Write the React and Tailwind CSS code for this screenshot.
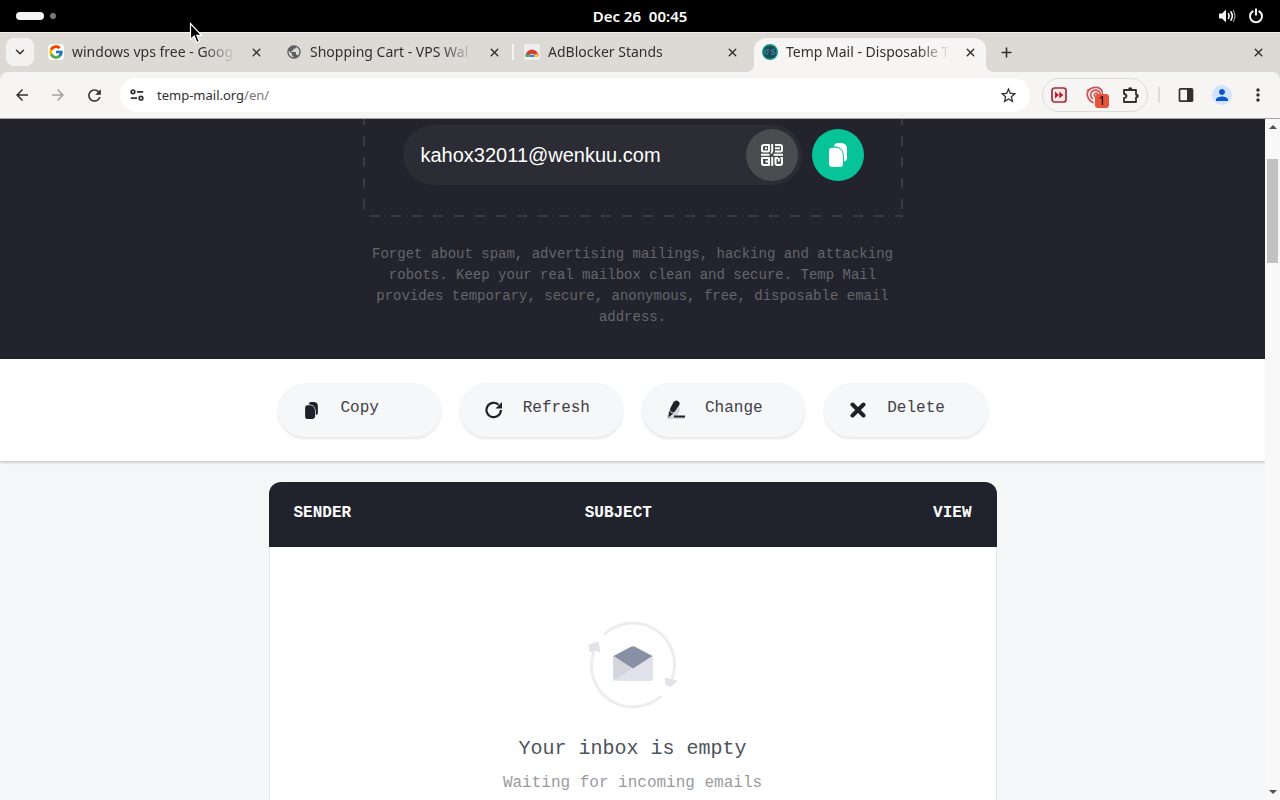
import { X, Plus, ChevronDown } from "lucide-react";
import { FcGoogle } from "react-icons/fc";
import {
  MdArrowBack,
  MdArrowForward,
  MdRefresh,
  MdStarBorder,
  MdPerson,
  MdMoreVert,
  MdPublic,
} from "react-icons/md";

const AdBlockFavicon = () => (
  <svg width="16" height="16" viewBox="0 0 16 16">
    <rect width="16" height="16" rx="2" fill="#eeeef2" />
    <path d="M1.5 12a6.5 6.5 0 0 1 13 0h-3.6a3 3 0 0 0-5.8 0z" fill="#d6402f" />
    <path d="M1.500 13a6.500 6.500 0 0 1 1.200-3.700l3 1.600a3 3 0 0 0-.6 2.100z" fill="#3fa757" />
    <path d="M14.500 13a6.500 6.500 0 0 0-1.200-3.700l-3 1.600a3 3 0 0 1 .6 2.100z" fill="#f5c52c" />
    <path d="M5.400 13a2.600 2.600 0 0 1 5.200 0z" fill="#3f83c9" />
  </svg>
);

const TempMailFavicon = () => (
  <svg width="16" height="16" viewBox="0 0 16 16">
    <circle cx="8" cy="8" r="7.3" fill="#1d4a5a" stroke="#179b86" strokeWidth="1.4" />
    <path
      d="M7 5.7H4.3C3 5.7 3 7.8 3 8.200s0 2 1.300 2H6M4.800 8h2M12.800 5.700h-2c-1.600 0-1.600 2.200 0 2.200h.8c1.600 0 1.600 2.300 0 2.300H9"
      fill="none"
      stroke="#3f9fa6"
      strokeWidth="1"
    />
  </svg>
);

const TuneIcon = () => (
  <svg width="14" height="12" viewBox="0 0 14 12" fill="none" stroke="#303030" strokeWidth="1.7">
    <circle cx="3" cy="2.800" r="1.800" />
    <path d="M7 2.800h6.200M.8 9.200H7" />
    <circle cx="11" cy="9.200" r="1.800" />
  </svg>
);

const VolumeIcon = () => (
  <svg width="18" height="16" viewBox="0 0 18 16" fill="none" stroke="#f2f2f2" strokeWidth="1.700" strokeLinecap="round">
    <path d="M1 5.500h3L8 1.500v13l-4-4H1z" fill="#f2f2f2" stroke="none" />
    <path d="M10.500 5.800q1.400 2.200 0 4.400" />
    <path d="M13 4q2.600 4 0 8" />
    <path d="M15.300 2.500q3.400 5.500 0 11" stroke="#9a9a9a" strokeWidth="1.200" />
  </svg>
);

const PowerIcon = () => (
  <svg width="16" height="16" viewBox="0 0 16 16" fill="none" stroke="#f2f2f2" strokeWidth="2" strokeLinecap="round">
    <path d="M4.700 3.300a6 6 0 1 0 6.600 0M8 1.200v5.600" />
  </svg>
);

const FastForwardIcon = () => (
  <svg width="16" height="16" viewBox="0 0 16 16">
    <rect x="1" y="1" width="14" height="14" rx="2.500" fill="#fbe9ea" stroke="#a92a35" strokeWidth="1.700" />
    <path d="M4 4.500 8 8l-4 3.500zM8.300 4.500l4 3.500-4 3.500z" fill="#b3212e" />
  </svg>
);

const SpiralIcon = () => (
  <svg width="18" height="18" viewBox="0 0 18 18" fill="none" stroke="#d2555a" strokeLinecap="round">
    <path d="M16 5C14 1 8 .2 4 3S.6 11 4 14.500l3 2" strokeWidth="1.800" />
    <path d="M14.500 7.500C13 4 9 3.400 6.500 5.300S4 10.500 6.500 12.500" strokeWidth="1.700" />
    <path d="M12.500 9C12 7 9.800 6.600 8.700 7.800s-.4 2.700.8 3" strokeWidth="1.500" />
    <path d="M1 4h3M16.500 6v3" strokeWidth="1.200" />
  </svg>
);

const PuzzleIcon = () => (
  <svg width="18" height="18" viewBox="0 0 18 18">
    <path
      d="M2 4h12v4.500a1.500 1.500 0 0 1 0 3V16H2v-4q2.500-.3 2.500-2T2 8z"
      fill="none"
      stroke="#303030"
      strokeWidth="1.800"
      strokeLinejoin="round"
    />
    <path d="M6 3.500a2.200 2.200 0 0 1 4.400 0zM14.500 7.800a2.200 2.200 0 0 1 0 4.400z" fill="#303030" />
  </svg>
);

const SidePanelIcon = () => (
  <svg width="16" height="16" viewBox="0 0 16 16">
    <rect x="1.500" y="1.800" width="13" height="12.400" rx="1" fill="none" stroke="#303030" strokeWidth="1.700" />
    <path d="M9 2h5.500v12H9z" fill="#303030" />
  </svg>
);

const QrIcon = () => (
  <svg width="22" height="22" viewBox="0 0 22 22" fill="none" stroke="#fff" strokeWidth="2" strokeLinejoin="round">
    <path d="M3 1h5v5q0 1.500-1.500 1.500h-4Q1 7.500 1 6V3q0-2 2-2zM4 4.200h2" />
    <path d="M14 1h5q2 0 2 2v3q0 1.500-1.500 1.500H14M14 4.200h5M11.200 0v7q0 1.500-1.500 2" />
    <path d="M0 10.800h8.500M12.500 10.800H22" />
    <path d="M1 14h7v7H3q-2 0-2-2zM4.500 17.500H8M11.200 13v9" />
    <path d="M17 14h-2.500v5q0 2 2 2H19q2 0 2-2v-5h-1.500M17.800 14v3.500" />
  </svg>
);

const CopyIcon = ({ width, height }) => (
  <svg width={width} height={height} viewBox="0 0 18 24" fill="currentColor">
    <path d="M5 3.500Q5.500 0 8.500 0H12q6 0 6 6v9q0 3-3 3.500V14q0-9-7.500-10.500z" />
    <path d="M0 8q0-3.300 3.300-3.300H6q8 0 8 8.300v7.500Q14 24 10.700 24H3.300Q0 24 0 20.700z" />
  </svg>
);

const ChangeIcon = () => (
  <svg width="18" height="20" viewBox="0 0 18 20" fill="#1f2129">
    <path d="M0 18 2 10l9-6 2 6-3 6h8v3H1z" fill="#d3d4d7" />
    <path d="M6.300 2.500Q8.500-.5 11 1t1.300 4l-4.500 6.500q-1.500 1.500-3.300.4T3.200 8.500z" />
    <path d="M2.300 10.500q1 2.600 4 3L1.300 17.500z" />
    <path d="M7 15.500h11v2H7z" />
  </svg>
);

const DeleteIcon = () => (
  <svg width="16" height="16" viewBox="0 0 16 16" stroke="#1f2129" strokeWidth="4" strokeLinecap="round">
    <path d="m2.500 2.500 11 11M13.500 2.500l-11 11" />
  </svg>
);

const ReloadIcon = () => (
  <svg width="18" height="18" viewBox="0 0 18 18">
    <path d="M15.900 9A7.200 7.200 0 1 1 13.600 3.700" fill="none" stroke="#1f2129" strokeWidth="2.200" />
    <path d="M17 1v6.500h-6.500z" fill="#1f2129" />
  </svg>
);

const EmptyInboxIcon = () => (
  <svg width="90" height="88" viewBox="0 0 90 88" fill="none">
    <path d="M16 14A41.500 41.500 0 0 1 84 58M73 75A41.500 41.500 0 0 1 6 30" stroke="#ecedef" strokeWidth="3" />
    <path d="m1 24 9-3 2 10-5-2-5 2z" fill="#e2e3e6" stroke="#e2e3e6" strokeWidth="1" />
    <path d="m77 57 12 3-7 6-4-3z" fill="#e2e3e6" stroke="#e2e3e6" strokeWidth="1" />
    <path d="M25 35h40v22q0 3-3 3H28q-3 0-3-3z" fill="#e2e2ec" />
    <path d="M25 35 45 47 27 59q-2-.5-2-3z" fill="#d5d5de" />
    <path d="M25.500 35 43 25.700q2-1 4 0L64.500 35 45 47.500z" fill="#8790a5" />
  </svg>
);

const tabs = [
  { title: "windows vps free - Goog", icon: <FcGoogle size={16} />, iconBg: "bg-white" },
  { title: "Shopping Cart - VPS Wal", icon: <MdPublic size={18} className="text-[#5c5f62]" />, separator: true },
  { title: "AdBlocker Stands", icon: <AdBlockFavicon /> },
  { title: "Temp Mail - Disposable T", icon: <TempMailFavicon />, active: true },
];

const actions = [
  { label: "Copy", icon: <CopyIcon width={13} height={17} /> },
  { label: "Refresh", icon: <ReloadIcon /> },
  { label: "Change", icon: <ChangeIcon /> },
  { label: "Delete", icon: <DeleteIcon /> },
];

const Tab = ({ tab }) => (
  <>
    <div
      className={`relative flex h-[34px] w-[232px] min-w-0 items-center rounded-t-xl pb-1.5 pl-2 pr-2 ${
        tab.active ? "bg-[#f6f5f4]" : ""
      }`}
    >
      {tab.active && (
        <>
          <span className="absolute -left-2 bottom-0 size-2 bg-[radial-gradient(circle_at_0_0,transparent_8px,#f6f5f4_8px)]" />
          <span className="absolute -right-2 bottom-0 size-2 bg-[radial-gradient(circle_at_100%_0,transparent_8px,#f6f5f4_8px)]" />
        </>
      )}
      <button className="flex min-w-0 flex-1 items-center gap-2 text-left">
        <span className={`flex size-4 shrink-0 items-center justify-center rounded-sm ${tab.iconBg || ""}`}>
          {tab.icon}
        </span>
        <span className="min-w-0 flex-1 overflow-hidden whitespace-nowrap mask-r-from-80% mask-r-to-100% text-sm leading-5">
          {tab.title}
        </span>
      </button>
      <button className="ml-3 flex size-4 shrink-0 items-center justify-center" aria-label="Close tab">
        <X size={13} strokeWidth={2.5} />
      </button>
    </div>
    <span className={`mx-0.5 mb-3 h-4 w-0.5 shrink-0 ${tab.separator ? "bg-[#f4f3f1]" : ""}`} />
  </>
);

const SystemBar = () => (
  <header className="grid h-8 shrink-0 grid-cols-3 items-center bg-black px-4 text-white">
    <div className="flex items-center gap-1.5">
      <span className="h-2 w-7 rounded-full bg-[#f4f4f4]" />
      <span className="size-1.5 rounded-full bg-[#777]" />
    </div>
    <p className="whitespace-pre text-center text-[15px] font-semibold leading-5">Dec 26  00:45</p>
    <div className="flex items-center justify-end gap-3">
      <VolumeIcon />
      <PowerIcon />
    </div>
  </header>
);

const TabStrip = () => (
  <nav className="flex h-10 shrink-0 items-end border-t border-[#f0efed] bg-[#dddad6] pl-1.5 pr-2">
    <button
      className="mb-1.5 mr-1.5 flex size-7 shrink-0 items-center justify-center rounded-lg bg-[#f4f2f0]"
      aria-label="Search tabs"
    >
      <ChevronDown size={14} strokeWidth={2.5} />
    </button>
    {tabs.map((tab) => (
      <Tab key={tab.title} tab={tab} />
    ))}
    <button className="mb-1.5 flex size-7 shrink-0 items-center justify-center" aria-label="New tab">
      <Plus size={15} strokeWidth={2.5} />
    </button>
    <button className="mb-1.5 ml-auto flex size-7 items-center justify-center" aria-label="Close window">
      <X size={13} strokeWidth={2.5} />
    </button>
  </nav>
);

const Toolbar = () => (
  <div className="shrink-0 bg-[#dddad6]">
    <div className="flex h-[47px] items-center rounded-t-lg border-b border-[#a5a4a3] bg-[#f6f5f4] px-1">
      <button className="flex size-9 items-center justify-center" aria-label="Back">
        <MdArrowBack size={18} />
      </button>
      <button className="flex size-9 items-center justify-center text-[#a3a2a1]" aria-label="Forward" disabled>
        <MdArrowForward size={18} />
      </button>
      <button className="flex size-9 items-center justify-center" aria-label="Reload">
        <MdRefresh size={19} />
      </button>
      <div className="ml-2 flex h-[34px] min-w-0 flex-1 items-center rounded-full bg-white pl-2.5 pr-3">
        <TuneIcon />
        <a href="#" className="ml-[13px] flex-1 text-[13px] leading-5 text-[#303030]">
          temp-mail.org<span className="text-[#77767b]">/en/</span>
        </a>
        <button aria-label="Bookmark this page">
          <MdStarBorder size={19} />
        </button>
      </div>
      <div className="ml-3 flex h-[34px] items-center rounded-full border border-[#dddbd9]">
        <button className="flex w-8 items-center justify-center" aria-label="FastForward">
          <FastForwardIcon />
        </button>
        <button className="relative flex w-10 items-center justify-center" aria-label="Blocker, 1 item">
          <SpiralIcon />
          <span className="absolute left-5 top-2 flex size-3.5 items-center justify-center rounded-[3px] bg-[#e5533a] text-xs leading-3 text-black">
            1
          </span>
        </button>
        <button className="flex w-8 items-center justify-center" aria-label="Extensions">
          <PuzzleIcon />
        </button>
      </div>
      <span className="ml-2.5 h-4 w-0.5 bg-[#dcdcdf]" />
      <button className="ml-2 flex size-9 items-center justify-center" aria-label="Side panel">
        <SidePanelIcon />
      </button>
      <button className="flex size-9 items-center justify-center" aria-label="Profile">
        <span className="flex size-5 items-center justify-center rounded-full bg-[#d3e3fd] text-[#0b57d0]">
          <MdPerson size={18} />
        </span>
      </button>
      <button className="flex size-9 items-center justify-center" aria-label="Menu">
        <MdMoreVert size={20} />
      </button>
    </div>
  </div>
);

const Hero = () => (
  <section className="bg-[#23232d] pb-[31px]">
    <div className="relative mx-auto flex max-w-[540px] items-center gap-2.5 pb-8 pl-10 pr-[39px] pt-1.5">
      {/* dashed frame */}
      <span className="absolute inset-y-0 left-0 w-0.5 bg-[repeating-linear-gradient(to_top,transparent_0_8px,#3a3a45_8px_18px,transparent_18px_21px)]" />
      <span className="absolute inset-y-0 right-0 w-0.5 bg-[repeating-linear-gradient(to_top,transparent_0_8px,#3a3a45_8px_18px,transparent_18px_21px)]" />
      <span className="absolute inset-x-0 bottom-0 h-0.5 bg-[repeating-linear-gradient(to_right,transparent_0_7px,#3a3a45_7px_17px,transparent_17px_21px)]" />
      <div className="flex h-[60px] min-w-0 flex-1 items-center rounded-full bg-[#2c2d34] pl-[18px] pr-1">
        <input
          className="min-w-0 flex-1 bg-transparent font-['Liberation_Sans',sans-serif] text-xl text-white outline-none"
          aria-label="Your temporary email address"
          value="kahox32011@wenkuu.com"
          readOnly
        />
        <button
          className="flex size-[52px] shrink-0 items-center justify-center rounded-full bg-[#4b4c50]"
          aria-label="Show QR code"
        >
          <QrIcon />
        </button>
      </div>
      <button
        className="flex size-[52px] shrink-0 items-center justify-center rounded-full bg-[#07c398] text-white"
        aria-label="Copy address"
      >
        <CopyIcon width={18} height={24} />
      </button>
    </div>
    <p className="mx-auto mt-[27px] max-w-[540px] text-center text-sm leading-[21px] text-[#65656b]">
      Forget about spam, advertising mailings, hacking and attacking robots. Keep your real mailbox clean and
      secure. Temp Mail provides temporary, secure, anonymous, free, disposable email address.
    </p>
  </section>
);

const ActionBar = () => (
  <section className="relative bg-white py-6 shadow-[0_1px_3px_rgba(0,0,0,0.25)]">
    <div className="mx-auto grid max-w-[710px] grid-cols-4 gap-[19px]">
      {actions.map(({ label, icon }) => (
        <button
          key={label}
          className="flex h-[54px] items-center rounded-full bg-[#f5f7f9] pl-[25px] text-[#3f4045] shadow-[0_2px_3px_rgba(0,0,0,0.1)]"
        >
          <span className="flex w-[18px] justify-center text-[#1f2129]">{icon}</span>
          <span className="ml-5 pb-1">{label}</span>
        </button>
      ))}
    </div>
  </section>
);

const Inbox = () => (
  <section className="mx-auto mt-[21px] max-w-[728px] overflow-hidden rounded-t-xl">
    <table className="w-full table-fixed">
      <thead className="bg-[#20232c] text-white">
        <tr className="h-[65px]">
          <th className="w-2/5 px-[25px] pb-1 text-left">SENDER</th>
          <th className="px-[25px] pb-1 text-left">SUBJECT</th>
          <th className="w-1/5 px-[25px] pb-1 text-right">VIEW</th>
        </tr>
      </thead>
    </table>
    <div className="flex flex-col items-center border-x border-[#e3e5e8] bg-white pb-24 pt-[74px]">
      <EmptyInboxIcon />
      <h2 className="mt-[26px] text-xl text-[#4c545c]">Your inbox is empty</h2>
      <p className="mt-2 text-[#9a9a9e]">Waiting for incoming emails</p>
    </div>
  </section>
);

const ScrollBar = () => (
  <div className="flex w-[15px] shrink-0 flex-col items-center bg-[#f8f8f8] py-1.5">
    <svg width="8" height="4" viewBox="0 0 8 4" fill="#505050">
      <path d="M0 4 4 0l4 4z" />
    </svg>
    <div className="mt-[30px] h-[104px] w-[11px] bg-[#c1c1c1]" />
    <svg className="mt-auto" width="8" height="4" viewBox="0 0 8 4" fill="#505050">
      <path d="m0 0 4 4 4-4z" />
    </svg>
  </div>
);

const Cursor = () => (
  <svg className="absolute left-[189px] top-[22px]" width="14" height="22" viewBox="0 0 14 22">
    <path
      d="M1.500 1.500v16l3.700-3.400 2.600 6.400 2.600-1.100-2.600-6.100h4.700z"
      fill="#000"
      stroke="#fff"
      strokeWidth="1.200"
    />
  </svg>
);

export default function App() {
  return (
    <div className="relative flex h-screen flex-col overflow-hidden font-['Noto_Sans',sans-serif] text-[#303030]">
      <SystemBar />
      <TabStrip />
      <Toolbar />
      <div className="flex min-h-0 flex-1">
        <main className="min-w-0 flex-1 overflow-hidden bg-[#f4f6f8] font-['Liberation_Mono',monospace]">
          <Hero />
          <ActionBar />
          <Inbox />
        </main>
        <ScrollBar />
      </div>
      <Cursor />
    </div>
  );
}
